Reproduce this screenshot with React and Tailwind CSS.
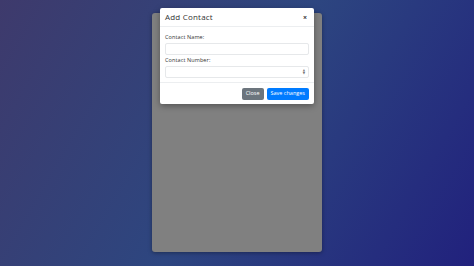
import { useState } from "react";

const font = { fontFamily: "'Open Sans', 'DejaVu Sans', sans-serif" };

export default function App() {
  const [name, setName] = useState("");
  const [number, setNumber] = useState("");

  return (
    <div
      className="relative w-full h-[266px] overflow-hidden bg-[linear-gradient(120deg,#3e3a6c_0%,#2d4680_50%,#21217d_100%)] flex justify-center pt-[13px]"
      style={font}
    >
      {/* Contact list panel (empty, dimmed behind modal) */}
      <div className="w-[170px] h-[239px] rounded-[3px] bg-[#808080] shadow-[0_1px_4px_rgba(0,0,0,0.35)]" />

      {/* Modal */}
      <div className="absolute left-[160px] top-[8px] w-[154px] bg-white rounded-[2px] shadow-[0_2px_6px_rgba(0,0,0,0.35)] flex flex-col">
        <div className="h-[19px] flex items-center justify-between px-[5px] border-b border-[#eceef0]">
          <span className="text-[8px] font-medium text-[#333] tracking-[0.2px]">Add Contact</span>
          <span className="text-[7px] leading-none text-[#333] font-bold pr-[2px]">×</span>
        </div>

        <div className="px-[5px] pt-[7px] pb-[4px] flex flex-col border-b border-[#eceef0]">
          <label className="text-[5.5px] text-[#333] leading-[6px] tracking-[0.1px]">Contact Name:</label>
          <input
            value={name}
            onChange={(e) => setName(e.target.value)}
            className="mt-[3px] h-[12px] w-full border border-[#e6e8ea] rounded-[2px] outline-none text-[5px] px-[3px]"
          />
          <label className="mt-[2px] text-[5.5px] text-[#333] leading-[6px] tracking-[0.1px]">Contact Number:</label>
          <div className="mt-[3px] h-[12px] w-full border border-[#e6e8ea] rounded-[2px] flex items-center justify-end pr-[3px]">
            <input
              value={number}
              onChange={(e) => setNumber(e.target.value)}
              className="flex-1 h-full outline-none text-[5px] px-[3px] min-w-0"
            />
            <div className="flex flex-col items-center leading-none text-[#777]">
              <span className="text-[3px]">▲</span>
              <span className="text-[3px]">▼</span>
            </div>
          </div>
        </div>

        <div className="h-[21px] flex items-center justify-end gap-[3px] px-[5px]">
          <button className="h-[12px] px-[4px] rounded-[2px] bg-[#6c757d] text-white text-[5.5px]">Close</button>
          <button className="h-[12px] px-[4px] rounded-[2px] bg-[#007bff] text-white text-[5.5px]">Save changes</button>
        </div>
      </div>
    </div>
  );
}
